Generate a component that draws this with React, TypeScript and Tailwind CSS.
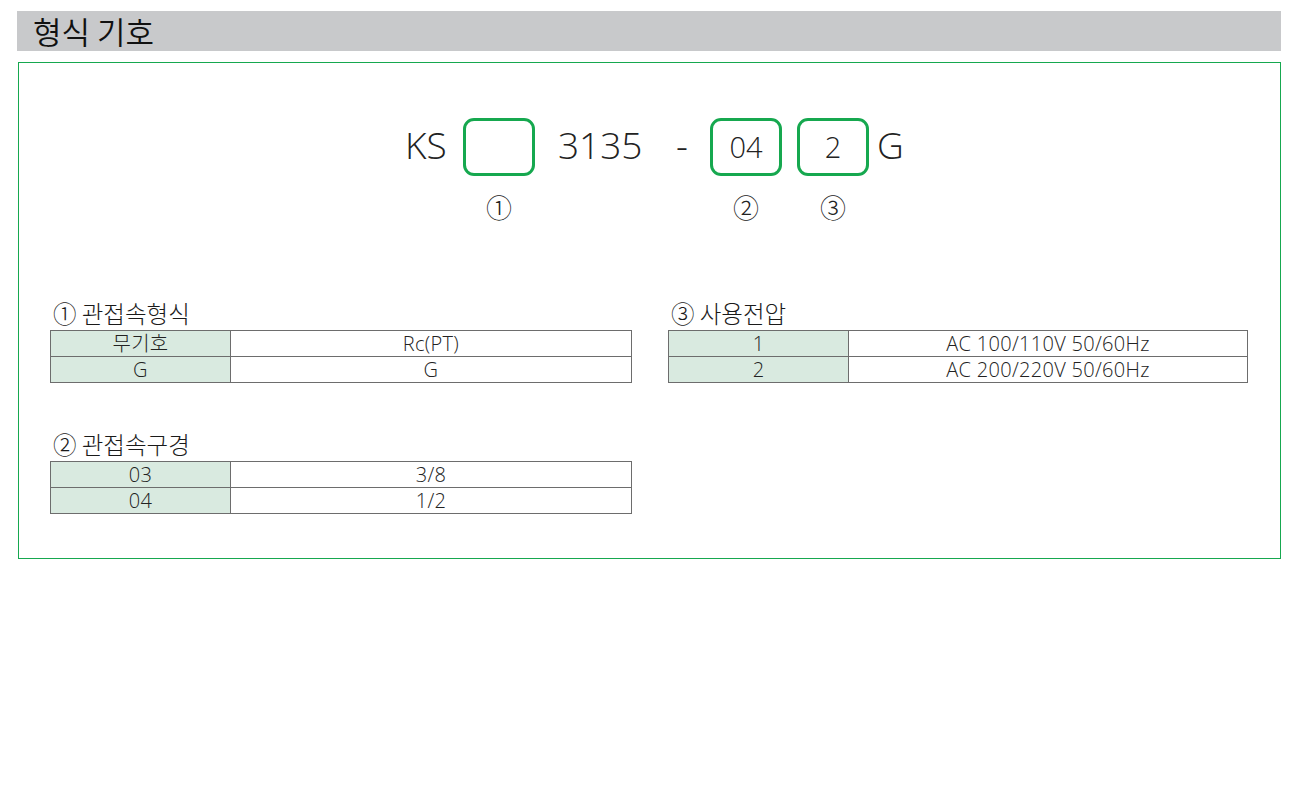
import React from 'react';

const latin = { fontFamily: '"Open Sans", "Noto Sans CJK KR", sans-serif' };
const korean = { fontFamily: '"Noto Sans CJK KR", "Noto Sans", sans-serif' };

interface Row {
  code: string;
  desc: string;
}

const SpecTable: React.FC<{ title: string; rows: Row[]; width: string }> = ({ title, rows, width }) => (
  <div className={`flex flex-col ${width}`}>
    <div className="text-[23.5px] leading-[24px] font-light text-[#1a1a1a] pl-[3px] mb-[5px]" style={korean}>
      {title}
    </div>
    <table className="w-full border-collapse border border-[#6d6d6d] text-[20px] font-light tracking-[0.3px] text-[#222]" style={latin}>
      <tbody>
        {rows.map((r) => (
          <tr key={r.code} className="h-[26px]">
            <td className="w-[180px] border border-[#6d6d6d] bg-[#d9eae0] text-center leading-[24px] p-0">{r.code}</td>
            <td className="border border-[#6d6d6d] text-center leading-[24px] p-0">{r.desc}</td>
          </tr>
        ))}
      </tbody>
    </table>
  </div>
);

const Slot: React.FC<{ value?: string; mark: string }> = ({ value, mark }) => (
  <div className="flex flex-col items-center">
    <div className="w-[72px] h-[58px] rounded-[11px] border-[3px] border-[#16a84f] flex items-center justify-center text-[29px] font-light text-[#222]">
      {value}
    </div>
    <div className="mt-[15px] text-[26px] leading-[32px] font-light text-[#222]" style={korean}>
      {mark}
    </div>
  </div>
);

const Plain: React.FC<{ text: string; className?: string }> = ({ text, className }) => (
  <div className={`h-[54px] flex items-center text-[37px] font-light text-[#222] ${className ?? ''}`}>{text}</div>
);

export default function App() {
  return (
    <div className="w-[1294px] h-[808px] bg-white" style={latin}>
      <div className="pt-[11px] pl-[17px]">
        <div className="w-[1264px] h-[40px] bg-[#c8c9cb] flex items-center pl-[16px] text-[31px] font-[350] text-[#111]" style={korean}>
          형식 기호
        </div>
      </div>
      <div className="ml-[18px] mt-[11px] w-[1263px] h-[497px] border border-[#16a84f]">
        <div className="flex items-start pt-[55px] pl-[386px]">
          <Plain text="KS" className="w-[58px]" />
          <Slot mark="①" />
          <Plain text="3135" className="ml-[23px] w-[118px]" />
          <Plain text="-" className="w-[34px]" />
          <Slot value="04" mark="②" />
          <div className="w-[15px]" />
          <Slot value="2" mark="③" />
          <Plain text="G" className="ml-[8px]" />
        </div>
        <div className="flex items-start pl-[31px] pt-[78px] gap-[36px]">
          <div className="flex flex-col gap-[49px]">
            <SpecTable
              title="① 관접속형식"
              width="w-[582px]"
              rows={[
                { code: '무기호', desc: 'Rc(PT)' },
                { code: 'G', desc: 'G' },
              ]}
            />
            <SpecTable
              title="② 관접속구경"
              width="w-[582px]"
              rows={[
                { code: '03', desc: '3/8' },
                { code: '04', desc: '1/2' },
              ]}
            />
          </div>
          <SpecTable
            title="③ 사용전압"
            width="w-[580px]"
            rows={[
              { code: '1', desc: 'AC 100/110V 50/60Hz' },
              { code: '2', desc: 'AC 200/220V 50/60Hz' },
            ]}
          />
        </div>
      </div>
    </div>
  );
}
